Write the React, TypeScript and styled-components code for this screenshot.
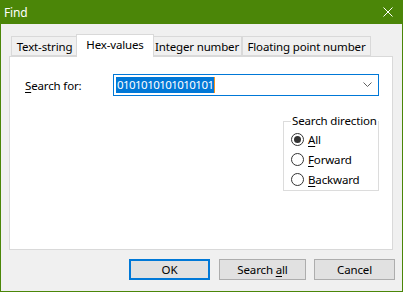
import React from 'react'
import styled, { createGlobalStyle } from 'styled-components'

const green = '#4b8608'
const line = '#d9d9d9'
const blue = '#0078d7'

const GlobalStyle = createGlobalStyle`
  html, body {
    margin: 0;
    padding: 0;
    background: #f0f0f0;
  }
  body {
    font-family: 'Noto Sans', 'Liberation Sans', sans-serif;
    font-size: 11.5px;
    letter-spacing: -0.15px;
    color: #000;
  }
  * {
    box-sizing: border-box;
  }
`

const Window = styled.div`
  width: 403px;
  height: 292px;
  display: flex;
  flex-direction: column;
  border: 1px solid ${green};
  border-top: none;
  background: #f0f0f0;
`

const TitleBar = styled.div`
  height: 24px;
  flex: none;
  margin: 0 -1px;
  padding: 0 10px 0 4px;
  display: flex;
  align-items: center;
  justify-content: space-between;
  background: ${green};
  color: #fff;
  font-size: 12px;
`

const Body = styled.div`
  flex: 1;
  display: flex;
  flex-direction: column;
  padding: 10px 9px 11px 8px;
`

const TabStrip = styled.div`
  height: 22px;
  display: flex;
  align-items: flex-end;
  padding-left: 2px;
`

const Tab = styled.div<{ $active?: boolean; $w: number }>`
  width: ${(p) => p.$w + (p.$active ? 4 : 0)}px;
  height: ${(p) => (p.$active ? 23 : 20)}px;
  margin: ${(p) => (p.$active ? '0 -2px -1px' : '0')};
  position: relative;
  z-index: ${(p) => (p.$active ? 1 : 0)};
  display: flex;
  align-items: center;
  justify-content: center;
  padding-bottom: ${(p) => (p.$active ? 3 : 0)}px;
  background: ${(p) => (p.$active ? '#fff' : '#f0f0f0')};
  border: 1px solid ${line};
  border-bottom: ${(p) => (p.$active ? 'none' : `1px solid ${line}`)};
  white-space: nowrap;
`

const Panel = styled.div`
  height: 194px;
  display: flex;
  flex-direction: column;
  padding: 17px 13px 0 15px;
  background: #fff;
  border: 1px solid ${line};
`

const SearchRow = styled.div`
  display: flex;
  align-items: center;
`

const FieldLabel = styled.div`
  width: 88px;
  flex: none;
`

const Combo = styled.div`
  flex: 1;
  height: 22px;
  display: flex;
  align-items: center;
  justify-content: space-between;
  padding: 0 6px 0 2px;
  border: 1px solid ${blue};
  background: #fff;
`

const Selected = styled.span`
  height: 16px;
  line-height: 16px;
  padding: 0 1px;
  background: ${blue};
  color: #fff;
  letter-spacing: -0.55px;
  border-right: 1px solid #f7931e;
`

const GroupBox = styled.fieldset`
  align-self: flex-end;
  width: 96px;
  min-width: 0;
  margin: 17px 0 0;
  padding: 0 0 1px 7px;
  border: 1px solid #dcdcdc;

  legend {
    padding: 0 1px;
    line-height: 16px;
    white-space: nowrap;
  }
`

const RadioRow = styled.div`
  height: 20px;
  display: flex;
  align-items: center;
  gap: 4px;
  white-space: nowrap;
`

const RadioDot = styled.span<{ $checked?: boolean }>`
  width: 13px;
  height: 13px;
  flex: none;
  border-radius: 50%;
  border: 1px solid #333;
  background: #fff;
  display: flex;
  align-items: center;
  justify-content: center;

  &::after {
    content: '';
    width: 7px;
    height: 7px;
    border-radius: 50%;
    background: #333;
    display: ${(p) => (p.$checked ? 'block' : 'none')};
  }
`

const ButtonRow = styled.div`
  display: flex;
  justify-content: flex-end;
  margin: 9px -2px 0 0;
`

const Button = styled.button<{ $w: number; $default?: boolean; $gap?: number }>`
  width: ${(p) => p.$w}px;
  height: 21px;
  margin-left: ${(p) => p.$gap ?? 0}px;
  padding: 0;
  font: inherit;
  letter-spacing: inherit;
  color: #000;
  background: #e1e1e1;
  border: ${(p) => (p.$default ? `2px solid ${blue}` : '1px solid #adadad')};
`

const U = styled.span`
  text-decoration: underline;
  text-underline-offset: 2px;
`

const CloseIcon = () => (
  <svg width="10" height="10" viewBox="0 0 10 10">
    <path d="M0.5 0.5 L9.5 9.5 M9.5 0.5 L0.5 9.5" stroke="#fff" strokeWidth="1" fill="none" />
  </svg>
)

const Chevron = () => (
  <svg width="9" height="6" viewBox="0 0 9 6">
    <polyline points="0.5,0.5 4.5,4.5 8.5,0.5" stroke="#606060" strokeWidth="1" fill="none" />
  </svg>
)

const tabs = [
  { label: 'Text-string', w: 67 },
  { label: 'Hex-values', w: 74, active: true },
  { label: 'Integer number', w: 90 },
  { label: 'Floating point number', w: 129 },
]

export default function App() {
  return (
    <>
      <GlobalStyle />
      <Window>
        <TitleBar>
          <span>Find</span>
          <CloseIcon />
        </TitleBar>
        <Body>
          <TabStrip>
            {tabs.map((t) => (
              <Tab key={t.label} $w={t.w} $active={t.active}>
                {t.label}
              </Tab>
            ))}
          </TabStrip>
          <Panel>
            <SearchRow>
              <FieldLabel>
                <U>S</U>earch for:
              </FieldLabel>
              <Combo>
                <Selected>0101010101010101</Selected>
                <Chevron />
              </Combo>
            </SearchRow>
            <GroupBox>
              <legend>Search direction</legend>
              <RadioRow>
                <RadioDot $checked />
                <span>
                  <U>A</U>ll
                </span>
              </RadioRow>
              <RadioRow>
                <RadioDot />
                <span>
                  <U>F</U>orward
                </span>
              </RadioRow>
              <RadioRow>
                <RadioDot />
                <span>
                  <U>B</U>ackward
                </span>
              </RadioRow>
            </GroupBox>
          </Panel>
          <ButtonRow>
            <Button $w={81} $default>
              OK
            </Button>
            <Button $w={87} $gap={9}>
              Search <U>a</U>ll
            </Button>
            <Button $w={81} $gap={8}>
              Cancel
            </Button>
          </ButtonRow>
        </Body>
      </Window>
    </>
  )
}
